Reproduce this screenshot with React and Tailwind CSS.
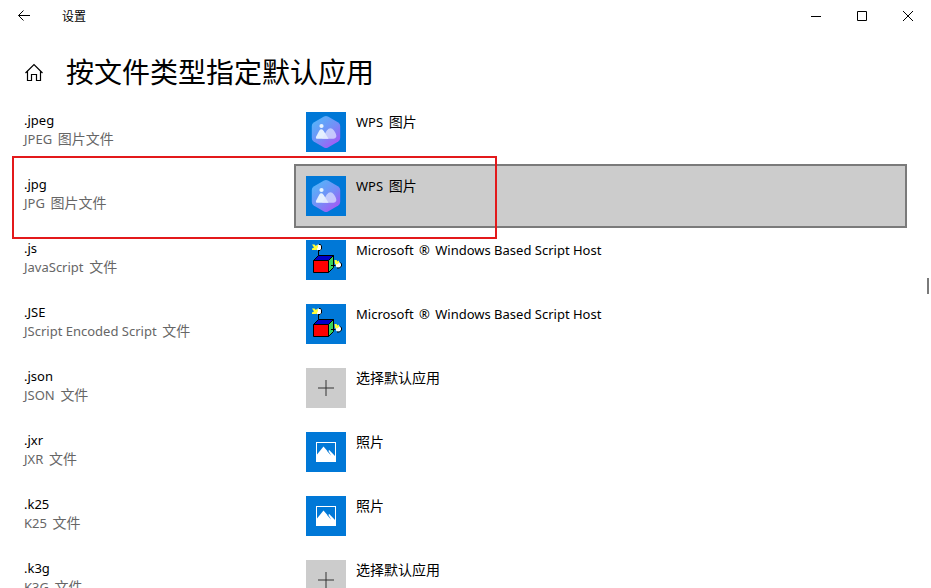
import React from "react";

const ROWS = [
  { ext: ".jpeg", prefix: "JPEG", suffix: "图片文件", app: "wps" },
  { ext: ".jpg", prefix: "JPG", suffix: "图片文件", app: "wps", selected: true },
  { ext: ".js", prefix: "JavaScript", suffix: "文件", app: "script" },
  { ext: ".JSE", prefix: "JScript Encoded Script", suffix: "文件", app: "script" },
  { ext: ".json", prefix: "JSON", suffix: "文件", app: "none" },
  { ext: ".jxr", prefix: "JXR", suffix: "文件", app: "photos" },
  { ext: ".k25", prefix: "K25", suffix: "文件", app: "photos" },
  { ext: ".k3g", prefix: "K3G", suffix: "文件", app: "none" },
];

function WpsIcon({ id }) {
  return (
    <svg viewBox="0 0 40 40" className="size-10 shrink-0 bg-[#0078d7]" aria-hidden="true">
      <defs>
        <linearGradient id={id} x1="0.1" y1="0.1" x2="0.8" y2="1">
          <stop offset="0" stopColor="#55b4fa" />
          <stop offset="0.5" stopColor="#7390f7" />
          <stop offset="1" stopColor="#a855f5" />
        </linearGradient>
      </defs>
      <path
        d="M18 4.6 Q20 3.5 22 4.6 L32.3 10.5 Q34.2 11.7 34.2 14 V26 Q34.2 28.3 32.3 29.5 L22 35.4 Q20 36.5 18 35.4 L7.7 29.5 Q5.8 28.3 5.8 26 V14 Q5.8 11.7 7.7 10.5 Z"
        fill={`url(#${id})`}
      />
      <circle cx="15.5" cy="14" r="2.1" fill="#e9f5ff" />
      <path d="M11.5 26.8 Q9.2 26.8 10.2 24.5 L13.2 18.7 Q15.2 16 17.5 18.7 L22.5 26.8 Z" fill="#e4f0ff" />
      <path d="M16 26.8 L20.8 18.5 Q24.5 13.8 28 18.5 Q31 23 30.2 25 Q29.5 26.8 27.5 26.8 Z" fill="#dfe5ff" fillOpacity="0.72" />
    </svg>
  );
}

function ScriptIcon() {
  return (
    <svg viewBox="0 0 40 40" className="size-10 shrink-0 bg-[#0078d7]" aria-hidden="true">
      <path d="M12.5 10 V16" stroke="#000" fill="none" />
      <path d="M7.5 20.5 L12.5 15.5 H27.5 L22.5 20.5 Z" fill="#0000c8" stroke="#000" />
      <path d="M22.5 20.5 L27.5 15.5 V27.5 L22.5 32.5 Z" fill="#35d35a" stroke="#000" />
      <path d="M7.5 20.5 H22.5 V32.5 H7.5 Z" fill="#f00" stroke="#000" />
      <path d="M25 25.5 H31" stroke="#000" />
      <circle cx="13" cy="7.5" r="3" fill="#fff" />
      <path d="M6 4.5 H8.5 L10 6 L12 4.5 V7 L10.5 10 H6 V8.5 L8 7.5 Z" fill="#ffff3c" />
      <path d="M13 4.5 H14.5 L15.5 6 V9 L14 10.5 H12" fill="none" stroke="#000" />
      <circle cx="32.5" cy="25" r="2.8" fill="#fff" />
      <path d="M28.5 20 H30.5 L31.5 21.5 L33 20.5 V23 L31 24.5 L29 24 Z" fill="#ffff3c" />
      <path d="M34.5 22.5 L35.5 24 V26 L33.5 28 H31" fill="none" stroke="#000" />
    </svg>
  );
}

function PhotosIcon() {
  return (
    <svg viewBox="0 0 40 40" className="size-10 shrink-0 bg-[#0078d7]" aria-hidden="true">
      <path
        fillRule="evenodd"
        d="M10 10 H30 V30 H10 Z M11 11 V22.5 L17.5 14.5 L21.8 19.6 L23.2 18 L29 24 V11 Z"
        fill="#fff"
      />
      <path d="M21.3 19.2 L22.3 18.8 L25.2 23.8 Z" fill="#0078d7" />
    </svg>
  );
}

function PlusIcon() {
  return (
    <svg viewBox="0 0 40 40" className="size-10 shrink-0 bg-[#ccc]" aria-hidden="true">
      <path d="M12 20 H28 M20 12 V28" stroke="#333" fill="none" />
    </svg>
  );
}

function AppIcon({ app, id }) {
  if (app === "wps") return <WpsIcon id={id} />;
  if (app === "script") return <ScriptIcon />;
  if (app === "photos") return <PhotosIcon />;
  return <PlusIcon />;
}

function AppName({ app }) {
  if (app === "wps")
    return (
      <>
        <span className="mr-0.5 text-[13px]">WPS</span> 图片
      </>
    );
  if (app === "script")
    return (
      <span className="text-[13px]">
        Microsoft <span className="mx-0.5">®</span> Windows Based Script Host
      </span>
    );
  return app === "photos" ? "照片" : "选择默认应用";
}

function FileTypeRow({ ext, prefix, suffix, app, selected }) {
  const labelId = `type-${ext.slice(1)}`;
  return (
    <li className="relative flex h-16 shrink-0">
      <div id={labelId} className="w-[270px] shrink-0 pt-[11px]">
        <div className="text-[13px] leading-[18px]">{ext}</div>
        <div className="leading-5 text-[#666]">
          <span className="mr-0.5 text-[13px]">{prefix}</span> {suffix}
        </div>
      </div>
      <button
        type="button"
        aria-describedby={labelId}
        className={`flex min-w-0 flex-1 items-start gap-2.5 border-2 p-2.5 text-left leading-5 ${
          selected ? "border-[#7a7a7a] bg-[#ccc]" : "border-transparent"
        }`}
      >
        <AppIcon app={app} id={`hex-${ext.slice(1)}`} />
        <span>
          <AppName app={app} />
        </span>
      </button>
      {selected && (
        <div className="pointer-events-none absolute -top-2 -left-3 h-[83px] w-[485px] border-2 border-[#e3191b]" />
      )}
    </li>
  );
}

export default function App() {
  return (
    <div className="flex h-screen flex-col overflow-hidden bg-white font-['Noto_Sans','Noto_Sans_CJK_SC',sans-serif] text-sm text-black">
      <header className="flex h-8 shrink-0 items-center">
        <button type="button" aria-label="返回" className="flex h-8 w-12 items-center justify-center">
          <svg viewBox="0 0 14 14" className="size-3.5" fill="none" stroke="#000" aria-hidden="true">
            <path d="M1.5 6.5 H13 M6.5 1.5 L1.5 6.5 L6.5 11.5" />
          </svg>
        </button>
        <span className="flex-1 pl-3.5 pt-0.5 text-xs">设置</span>
        <button type="button" aria-label="最小化" className="flex h-8 w-[46px] items-center justify-center">
          <svg viewBox="0 0 10 10" className="size-2.5" fill="none" stroke="#000" aria-hidden="true">
            <path d="M0 5.5 H10" />
          </svg>
        </button>
        <button type="button" aria-label="最大化" className="flex h-8 w-[46px] items-center justify-center">
          <svg viewBox="0 0 10 10" className="size-2.5" fill="none" stroke="#000" aria-hidden="true">
            <path d="M0.5 0.5 H9.5 V9.5 H0.5 Z" />
          </svg>
        </button>
        <button type="button" aria-label="关闭" className="flex h-8 w-[46px] items-center justify-center">
          <svg viewBox="0 0 10 10" className="size-2.5" fill="none" stroke="#000" aria-hidden="true">
            <path d="M0 0 L10 10 M10 0 L0 10" />
          </svg>
        </button>
      </header>

      <div className="flex h-[68px] shrink-0 items-center gap-[22px] px-6 pb-1 pt-4">
        <button type="button" aria-label="主页" className="flex size-5 items-center justify-center">
          <svg viewBox="0 0 20 20" className="size-5" fill="none" stroke="#000" strokeWidth="1.2" aria-hidden="true">
            <path d="M1.5 11 L10 2.5 L18.5 11 M3.5 9.5 V18.5 H7.5 V12.5 H12.5 V18.5 H16.5 V9.5" />
          </svg>
        </button>
        <h1 className="text-[28px] leading-9">按文件类型指定默认应用</h1>
      </div>

      <div className="flex min-h-0 flex-1">
        <ul className="flex min-w-0 flex-1 flex-col pl-6">
          {ROWS.map((row) => (
            <FileTypeRow key={row.ext} {...row} />
          ))}
        </ul>
        <div className="flex w-6 shrink-0 justify-end pr-0.5 pt-[178px]">
          <div className="h-4 w-0.5 bg-[#7a7a7a]" />
        </div>
      </div>
    </div>
  );
}
